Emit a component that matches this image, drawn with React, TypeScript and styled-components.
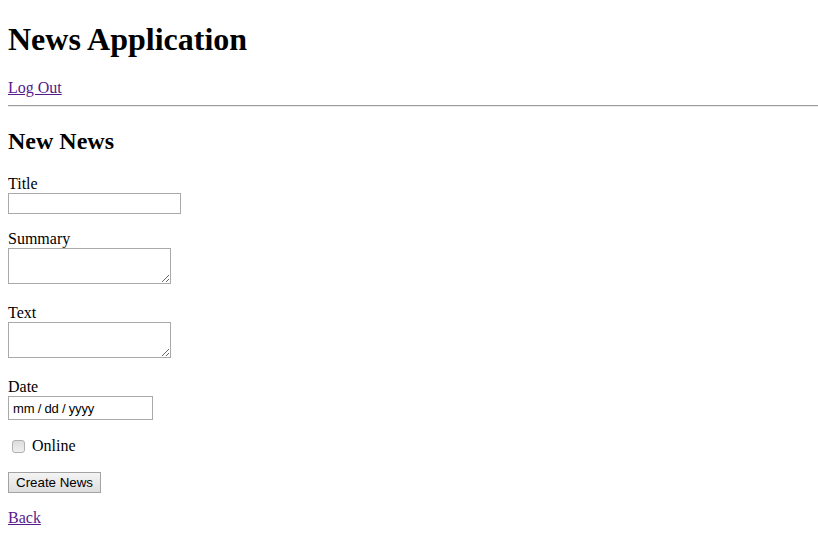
import React from "react";
import styled, { createGlobalStyle } from "styled-components";

const GlobalStyle = createGlobalStyle`
  body {
    margin: 0 0 8px 8px;
    font-family: "Liberation Serif", "Times New Roman", serif;
    font-size: 16px;
    color: #000;
    background: #fff;
  }
`;

export default function App() {
  return (
    <>
      <GlobalStyle />
      <Title>News Application</Title>
      <Link href="#">Log Out</Link>
      <Rule />
      <SubTitle>New News</SubTitle>
      <form onSubmit={(e) => e.preventDefault()}>
        <Field>
          <Label>Title</Label>
          <TextInput type="text" />
        </Field>
        <Field $extra={4}>
          <Label>Summary</Label>
          <TextArea />
        </Field>
        <Field $extra={4}>
          <Label>Text</Label>
          <TextArea />
        </Field>
        <Field>
          <Label>Date</Label>
          <DateInput type="text" placeholder="mm / dd / yyyy" />
        </Field>
        <CheckRow>
          <Check type="checkbox" />
          <span>Online</span>
        </CheckRow>
        <Field>
          <Button type="submit">Create News</Button>
        </Field>
      </form>
      <Para>
        <Link href="#">Back</Link>
      </Para>
    </>
  );
}

const Title = styled.h1`
  font-size: 32px;
  font-weight: bold;
  margin: 21px 0;
  line-height: 37px;
`;

const Para = styled.p`
  margin: 16px 0;
  line-height: 18px;
`;

const Link = styled.a`
  color: #551a8b;
  text-decoration: underline;
  line-height: 18px;
`;

const Rule = styled.hr`
  margin: 8px 0;
  border: none;
  border-top: 1px solid #9a9a9a;
  border-bottom: 1px solid #eeeeee;
  height: 0;
`;

const SubTitle = styled.h2`
  font-size: 24px;
  font-weight: bold;
  margin: 20px 0;
  line-height: 28px;
`;

const Field = styled.div<{ $extra?: number }>`
  margin: 16px 0;
  padding-bottom: ${(p) => p.$extra ?? 0}px;
  line-height: 18px;
`;

const Label = styled.label`
  display: block;
`;

const TextInput = styled.input`
  display: block;
  box-sizing: border-box;
  width: 173px;
  height: 21px;
  margin: 0;
  border: 1px solid #a9a9a9;
  padding: 1px 2px;
  font: 13px "Liberation Sans", Arial, sans-serif;
  outline: none;
`;

const TextArea = styled.textarea`
  display: block;
  box-sizing: border-box;
  width: 163px;
  height: 36px;
  margin: 0;
  border: 1px solid #a9a9a9;
  padding: 2px;
  font: 13px "Liberation Mono", monospace;
  outline: none;
`;

const DateInput = styled(TextInput)`
  width: 145px;
  height: 24px;
  padding: 1px 4px;
  &::placeholder {
    color: #000;
    font-size: 13px;
    letter-spacing: -0.2px;
  }
`;

const CheckRow = styled.label`
  display: flex;
  align-items: center;
  margin: 17px 0 17px;
  line-height: 18px;
  padding-left: 4px;
`;

const Check = styled.input`
  appearance: none;
  width: 13px;
  height: 13px;
  margin: 0 7px 0 0;
  border: 1px solid #b0b0b0;
  border-radius: 3px;
  background: linear-gradient(#dcdcdc, #f0f0f0);
`;

const Button = styled.button`
  height: 21px;
  padding: 1px 7px;
  border: 1px solid #a3a3a3;
  border-radius: 0;
  background: linear-gradient(#f4f4f4, #dedede);
  font: 13.33px "Liberation Sans", Arial, sans-serif;
  color: #000;
  margin-bottom: 0;
`;
